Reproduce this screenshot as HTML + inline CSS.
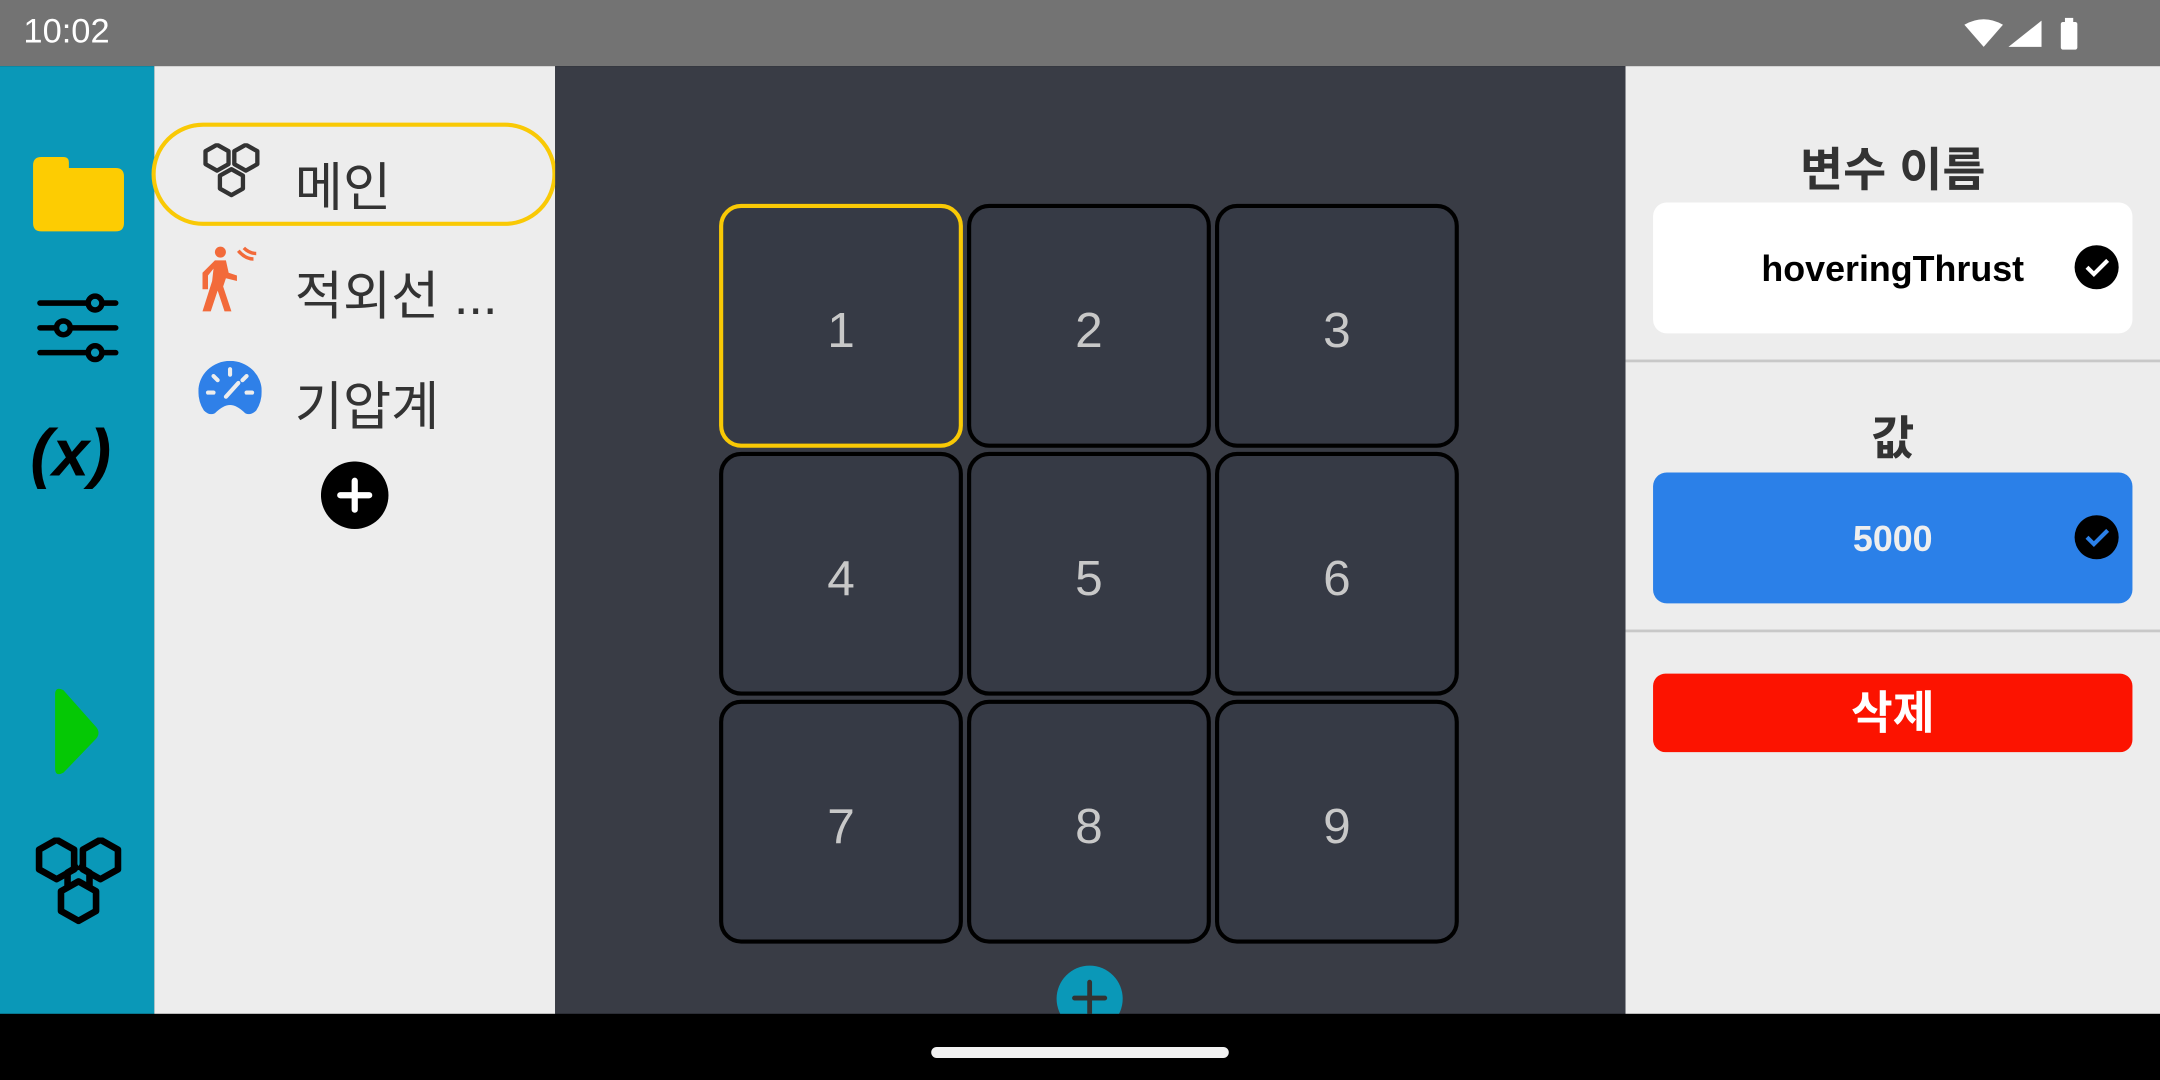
<!DOCTYPE html>
<html><head><meta charset="utf-8"><style>
*{margin:0;padding:0;box-sizing:border-box}
html,body{width:2160px;height:1080px;overflow:hidden;background:#000}
#w{width:1568px;height:784px;transform:scale(1.377551);transform-origin:0 0;position:relative;font-family:"Liberation Sans","Noto Sans CJK KR",sans-serif}
.abs{position:absolute}
#status{left:0;top:0;width:1568px;height:48px;background:#737373;color:#fff;font-size:25px}
#rail{left:0;top:48px;width:112px;height:688px;background:#0a98b8}
#panel{left:112px;top:48px;width:291px;height:688px;background:#ededed}
#center{left:403px;top:48px;width:777px;height:688px;background:#393c45}
#right{left:1180px;top:48px;width:388px;height:688px;background:#ededed}
#nav{left:0;top:736px;width:1568px;height:48px;background:#000}
.cell{position:absolute;width:177px;height:177px;border:3px solid #000;border-radius:16px;background:#363a45;color:#c8c8c8;font-size:36px;display:flex;align-items:center;justify-content:center;padding-top:6px}
.item{position:absolute;left:214px;font-size:38px;color:#333}
</style></head><body><div id="w">
<div id="status" class="abs">
 <div class="abs" style="left:17px;top:9px">10:02</div>
 <svg class="abs" style="left:1420px;top:12px" width="100" height="26" viewBox="0 0 100 26">
  <path d="M6 6 Q20 -2 34 6 L20 22 Z" fill="#fff"/>
  <path d="M38 22 L62 3 L62 22 Z" fill="#fff"/>
  <rect x="76" y="4" width="12" height="20" rx="1.5" fill="#fff"/><rect x="79" y="1" width="6" height="4" fill="#fff"/>
 </svg>
</div>
<div id="rail" class="abs">
 <svg class="abs" style="left:22px;top:64px" width="70" height="60" viewBox="0 0 70 60"><path d="M8 2 H24 Q28 2 28 6 V10 H62 Q68 10 68 16 V50 Q68 56 62 56 H8 Q2 56 2 50 V8 Q2 2 8 2Z" fill="#fdcc02"/></svg>
 <svg class="abs" style="left:26px;top:162px" width="62" height="56" viewBox="0 0 62 56" stroke="#000" stroke-width="4" fill="none" stroke-linecap="round">
  <line x1="3" y1="10" x2="58" y2="10"/><line x1="3" y1="28" x2="58" y2="28"/><line x1="3" y1="46" x2="58" y2="46"/>
  <circle cx="43" cy="10" r="5" fill="#0a98b8"/><circle cx="20" cy="28" r="5" fill="#0a98b8"/><circle cx="43" cy="46" r="5" fill="#0a98b8"/>
 </svg>
 <div class="abs" style="left:22px;top:254px;font-size:48px;font-weight:bold;font-style:italic;color:#000">(x)</div>
 <svg class="abs" style="left:36px;top:450px" width="40" height="70" viewBox="0 0 40 70"><path d="M4 6 Q4 0 10 3 L34 30 Q37 34 34 38 L10 63 Q4 66 4 60 Z" fill="#05c805"/></svg>
 <svg class="abs" style="left:22px;top:560px" width="70" height="70" viewBox="0 0 88 88" fill="none" stroke="#000" stroke-width="6" stroke-linejoin="round">
  <path d="M24 2 L40 11 V29 L24 38 L8 29 V11Z"/><path d="M64 2 L80 11 V29 L64 38 L48 29 V11Z"/><path d="M44 40 L60 49 V67 L44 76 L28 67 V49Z"/><path d="M44 26 L54 32 V44 M44 26 L34 32 V44"/>
 </svg>
</div>
<div id="panel" class="abs"></div>
<div class="abs" style="left:110px;top:89px;width:294px;height:75px;border:3px solid #f9c905;border-radius:38px"></div>
<svg class="abs" style="left:145px;top:104px" width="46" height="46" viewBox="0 0 88 88" fill="none" stroke="#333" stroke-width="6" stroke-linejoin="round">
 <path d="M24 2 L40 11 V29 L24 38 L8 29 V11Z"/><path d="M64 2 L80 11 V29 L64 38 L48 29 V11Z"/><path d="M44 36 L60 45 V63 L44 72 L28 63 V45Z"/>
</svg>
<div class="item" style="top:105px">메인</div>
<svg class="abs" style="left:144px;top:178px" width="46" height="50" viewBox="0 0 46 50" fill="#f26a3a">
 <circle cx="16" cy="5" r="4"/><path d="M12 11 L20 11 L22 20 L28 22 L28 26 L20 24 L18 30 L24 48 L19 48 L14 33 L9 48 L3 48 L10 26 L11 17 L7 22 L7 32 L3 32 L3 20Z"/>
 <path d="M29 4 Q34 10 40 10" stroke="#f26a3a" stroke-width="2.5" fill="none"/><path d="M33 2 Q37 6 42 6" stroke="#f26a3a" stroke-width="2.5" fill="none"/>
</svg>
<div class="item" style="top:184px">적외선 ...</div>
<svg class="abs" style="left:144px;top:262px" width="46" height="42" viewBox="0 0 46 42">
 <path d="M4 36 Q0 30 0 22 A23 22 0 0 1 46 22 Q46 30 42 36 Q38 40 34 38 Q28 32 23 32 Q18 32 12 38 Q8 40 4 36Z" fill="#2f80e8"/>
 <g stroke="#ededed" stroke-width="3" stroke-linecap="round"><line x1="23" y1="6" x2="23" y2="10"/><line x1="11" y1="11" x2="14" y2="14"/><line x1="35" y1="11" x2="32" y2="14"/><line x1="7" y1="23" x2="11" y2="23"/><line x1="35" y1="23" x2="39" y2="23"/><line x1="20" y1="26" x2="29" y2="16"/></g>
</svg>
<div class="item" style="top:264px">기압계</div>
<svg class="abs" style="left:233px;top:335px" width="49" height="49" viewBox="0 0 49 49"><circle cx="24.5" cy="24.5" r="24.5" fill="#000"/><path d="M24.5 14V35M14 24.5H35" stroke="#fff" stroke-width="4.5" stroke-linecap="round"/></svg>
<div id="center" class="abs">
 <div class="cell" style="left:119px;top:100px;border-color:#f9c905">1</div>
 <div class="cell" style="left:299px;top:100px">2</div>
 <div class="cell" style="left:479px;top:100px">3</div>
 <div class="cell" style="left:119px;top:280px">4</div>
 <div class="cell" style="left:299px;top:280px">5</div>
 <div class="cell" style="left:479px;top:280px">6</div>
 <div class="cell" style="left:119px;top:460px">7</div>
 <div class="cell" style="left:299px;top:460px">8</div>
 <div class="cell" style="left:479px;top:460px">9</div>
 <svg class="abs" style="left:363px;top:652px" width="50" height="36" viewBox="0 0 50 36"><circle cx="25" cy="25" r="24" fill="#0a98b8"/><path d="M25 13V36M14 24.5H36" stroke="#333" stroke-width="3.5" stroke-linecap="round"/></svg>
</div>
<div id="right" class="abs">
 <div class="abs" style="left:0;width:388px;top:48px;text-align:center;font-size:34px;font-weight:bold;color:#333">변수 이름</div>
 <div class="abs" style="left:20px;top:99px;width:348px;height:95px;background:#fff;border-radius:10px">
  <div class="abs" style="left:0;width:348px;top:33px;text-align:center;font-size:26px;font-weight:bold;color:#000">hoveringThrust</div>
  <svg class="abs" style="left:305px;top:30px" width="34" height="34" viewBox="0 0 34 34"><circle cx="17" cy="17" r="16" fill="#000"/><path d="M10 17 L15 22 L25 12" stroke="#fff" stroke-width="3" fill="none"/></svg>
 </div>
 <div class="abs" style="left:0;top:213px;width:388px;height:2px;background:#c8c8c8"></div>
 <div class="abs" style="left:0;width:388px;top:243px;text-align:center;font-size:34px;font-weight:bold;color:#333">값</div>
 <div class="abs" style="left:20px;top:295px;width:348px;height:95px;background:#2b80e8;border-radius:10px">
  <div class="abs" style="left:0;width:348px;top:33px;text-align:center;font-size:26px;font-weight:bold;color:#eee">5000</div>
  <svg class="abs" style="left:305px;top:30px" width="34" height="34" viewBox="0 0 34 34"><circle cx="17" cy="17" r="16" fill="#000"/><path d="M10 17 L15 22 L25 12" stroke="#2b80e8" stroke-width="3" fill="none"/></svg>
 </div>
 <div class="abs" style="left:0;top:409px;width:388px;height:2px;background:#c8c8c8"></div>
 <div class="abs" style="left:20px;top:441px;width:348px;height:57px;background:#fc1300;border-radius:9px;text-align:center;font-size:33px;font-weight:bold;color:#fff;line-height:57px">삭제</div>
</div>
<div id="nav" class="abs"><div class="abs" style="left:676px;top:24px;width:216px;height:8px;border-radius:4px;background:#f2f2f2"></div></div>
</div></body></html>
